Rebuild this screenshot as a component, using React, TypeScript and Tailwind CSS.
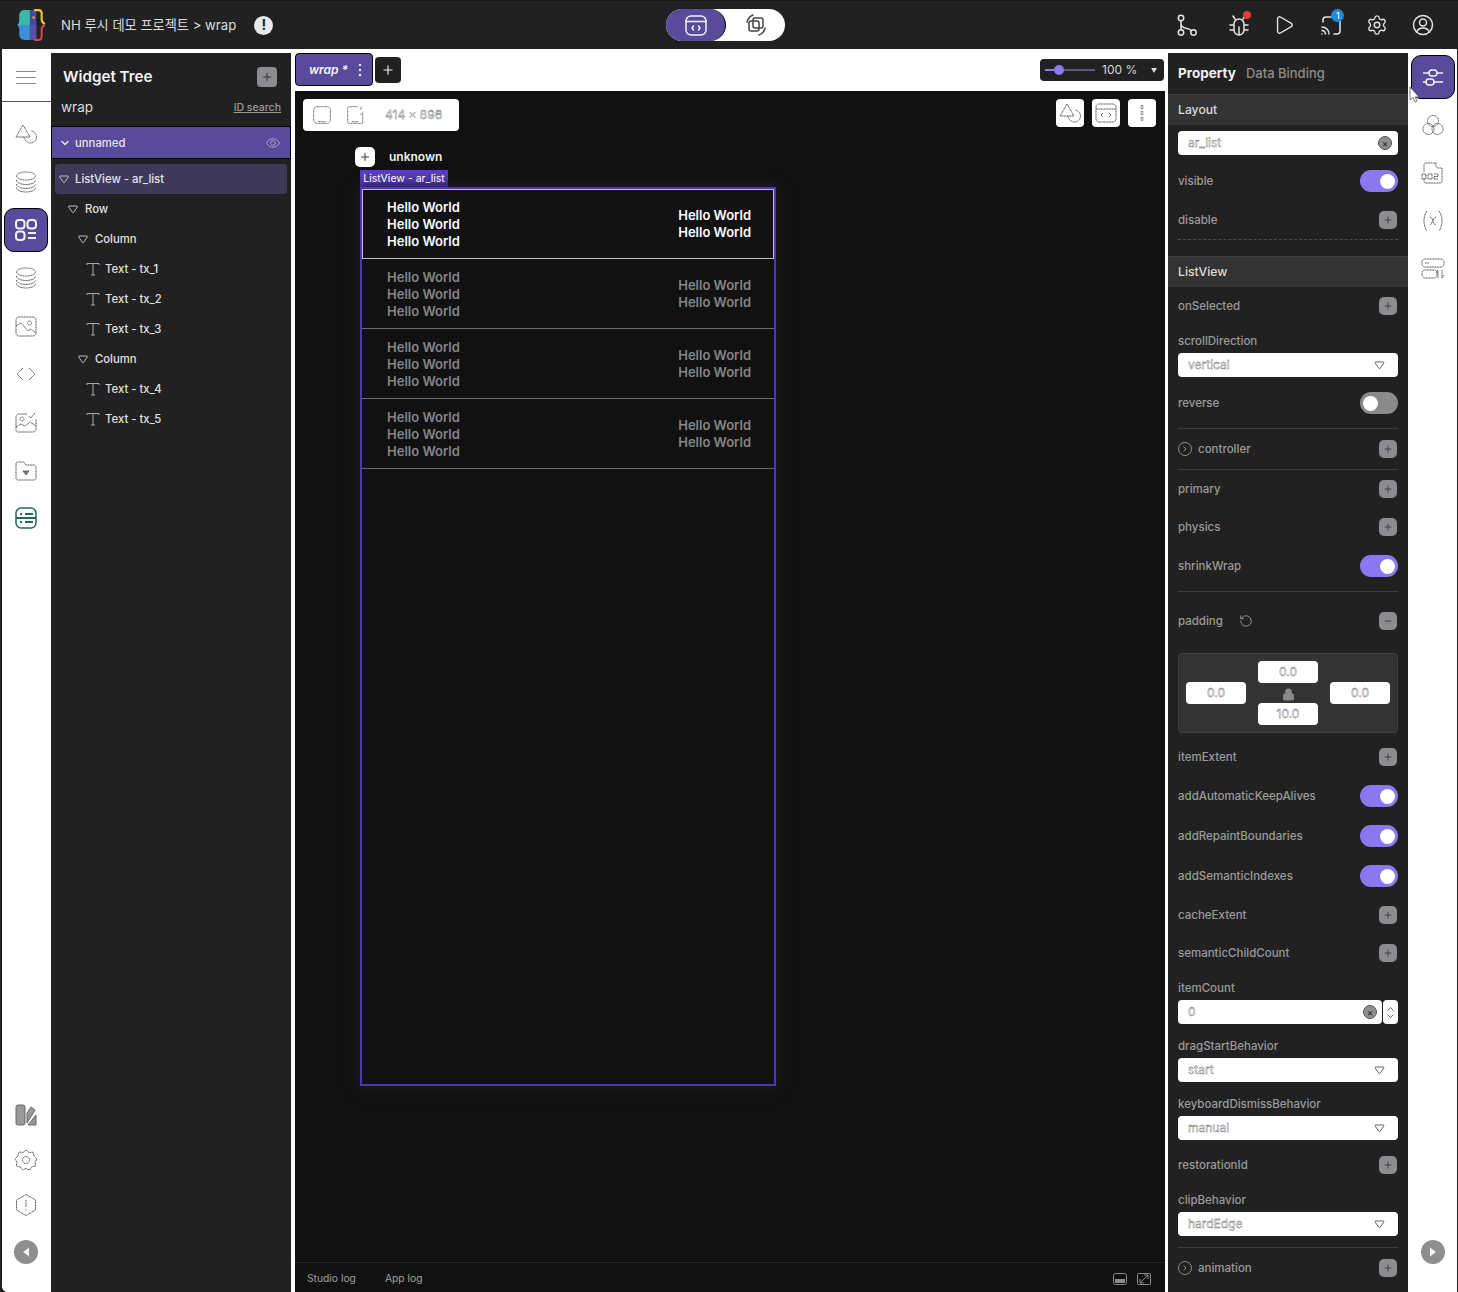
import React from 'react';
import { Plus, Minus, Play, Settings, RotateCw, ChevronDown, Lock } from 'lucide-react';

const FONT = 'font-["Inter","Noto_Sans_CJK_KR",sans-serif]';
const GHOST = 'text-transparent [-webkit-text-stroke:0.35px_#555]';

/** Dotted outline icon, the rail icons look like this on the white background. */
const Dotted = ({ children, size = 24, box = 24 }: { children: React.ReactNode; size?: number; box?: number }) => (
  <svg width={size} height={size} viewBox={`0 0 ${box} ${box}`} fill="none" stroke="#555" strokeWidth="1" strokeDasharray="1.2 0.4">
    {children}
  </svg>
);

const Logo = () => (
  <svg width="32" height="32" viewBox="3 1 28 30" fill="none">
    <path d="M6 7c0-3 2-5 5-5h5v14H4c1-1 2-2 2-4z" fill="#3fb7a6" />
    <path d="M4 16h12v14h-5c-3 0-5-2-5-5v-5c0-2-1-3-2-4z" fill="#3d8fd9" />
    <rect x="16" y="2" width="6" height="28" fill="#4a4a9c" />
    <rect x="16" y="16" width="6" height="14" fill="#5b4ea8" />
    <circle cx="19.5" cy="9" r="1.2" fill="#e8a33a" />
    <path d="M20 2h4c2 0 3 1 3 3v6c0 2 1 3 3 4" stroke="#f0c23c" strokeWidth="2" />
    <path d="M30 16c-2 1-3 2-3 4v6c0 2-1 4-3 4h-4" stroke="#d6453d" strokeWidth="2" />
  </svg>
);

const TopIcon = ({ children, className }: { children: React.ReactNode; className: string }) => (
  <div className={`relative flex items-center justify-center ${className}`}>{children}</div>
);

const WhiteStroke = ({ children }: { children: React.ReactNode }) => (
  <svg width="24" height="24" viewBox="0 0 24 24" fill="none" stroke="#e4e4e4" strokeWidth="1.5" strokeLinecap="round" strokeLinejoin="round">
    {children}
  </svg>
);

const TopBar = () => (
  <div className={`h-[49px] shrink-0 flex items-center bg-[#212121] border-t border-[#171717] ${FONT}`}>
    <div className="ml-[15px] w-[32px] h-[32px]"><Logo /></div>
    <span className="ml-[14px] pt-[1px] text-[13.2px] text-[#dcdcdc] whitespace-nowrap">NH 루시 데모 프로젝트 &gt; wrap</span>
    <div className="ml-[18px] w-[19px] h-[19px] rounded-full bg-[#e8e8e8] flex items-center justify-center text-[#212121] text-[14px] font-bold leading-none">!</div>
    <div className="ml-[393px] w-[119px] h-[32px] rounded-full bg-white flex items-center">
      <div className="w-[60px] h-[32px] rounded-full bg-[#5a4a9c] flex items-center justify-center border-r border-black">
        <svg width="24" height="24" viewBox="0 0 24 24" fill="none" stroke="#f2f2f2" strokeWidth="1.5" strokeLinecap="round">
          <rect x="2" y="3" width="20" height="19" rx="5" />
          <path d="M2 8.5h20M9.5 13l-1.5 2 1.5 2M14.5 13l1.5 2-1.5 2" />
        </svg>
      </div>
      <div className="flex-1 flex items-center justify-center">
        <svg width="24" height="24" viewBox="0 0 24 24" fill="none" stroke="#444" strokeWidth="1.5">
          <rect x="5" y="8" width="10" height="10" rx="2" />
          <rect x="9" y="5" width="10" height="10" rx="2" />
          <path d="M3 9a9.5 9.5 0 0 1 6-7M21 15a9.5 9.5 0 0 1-6 7" strokeLinecap="round" />
        </svg>
      </div>
    </div>
    <TopIcon className="ml-[390px]">
      <WhiteStroke>
        <circle cx="6" cy="5" r="2.7" /><circle cx="6" cy="19.5" r="2.7" /><circle cx="18.5" cy="19.5" r="2.7" />
        <path d="M6 8v9M6 10.5c0 3 3 4.5 6 5 2 .3 3 1 4 2" />
      </WhiteStroke>
    </TopIcon>
    <TopIcon className="ml-[28px]">
      <WhiteStroke>
        <path d="M7 11a5 5 0 0 1 10 0v6a5 5 0 0 1-10 0zM12 14v8M8 6 6 3M16 6l2-3M7 12H3M17 12h4M7 17H3M17 17h4" />
      </WhiteStroke>
      <span className="absolute -top-[2px] right-0 w-[8px] h-[8px] rounded-full bg-[#e53935]" />
    </TopIcon>
    <TopIcon className="ml-[22px]"><Play size={22} strokeWidth={1.5} color="#e4e4e4" /></TopIcon>
    <TopIcon className="ml-[24px]">
      <WhiteStroke>
        <path d="M4 9V7a3 3 0 0 1 3-3h12c1 0 2 1 2 2v12a3 3 0 0 1-3 3h-3M3 14a7 7 0 0 1 7 7M3 17.5a3.500 3.500 0 0 1 3.500 3.500M3 21h.01" />
      </WhiteStroke>
      <span className="absolute -top-[4px] -right-[1px] w-[13px] h-[13px] rounded-full bg-[#1e88e5] text-white text-[9px] font-medium leading-[13px] text-center">1</span>
    </TopIcon>
    <TopIcon className="ml-[23px]"><Settings size={22} strokeWidth={1.5} color="#e4e4e4" /></TopIcon>
    <TopIcon className="ml-[23px]">
      <WhiteStroke>
        <circle cx="12" cy="12" r="9.500" /><circle cx="12" cy="9.500" r="3.500" /><path d="M5.500 19c1.500-3 3.500-4 6.500-4s5 1 6.500 4" />
      </WhiteStroke>
    </TopIcon>
  </div>
);

const RailIcons = {
  shapes: <Dotted><path d="M9 3 2 15h14z" /><path d="M12 19a6 6 0 1 0 5-10" /><path d="M10 15a6 6 0 0 0 2 4" /></Dotted>,
  layers: <Dotted><ellipse cx="12" cy="6" rx="9.500" ry="4" /><path d="M2.500 10c0 2.500 4 4.500 9.500 4.500s9.500-2 9.500-4.500M2.500 14c0 2.500 4 4.500 9.500 4.500s9.500-2 9.500-4.500M2.500 17.500c0 2.500 4 4.500 9.500 4.500s9.500-2 9.500-4.500" /></Dotted>,
  image: <Dotted><rect x="2" y="3" width="20" height="19" rx="3" /><circle cx="15.500" cy="9" r="2" /><path d="M2 12l5-3 7 8 3-2 5 4" /></Dotted>,
  code: <Dotted><path d="M9 6l-6 6 6 6M15 6l6 6-6 6" /></Dotted>,
  imageCheck: <Dotted><path d="M13 4H5a3 3 0 0 0-3 3v13a2 2 0 0 0 2 2h15a3 3 0 0 0 3-3V9" /><circle cx="8" cy="9" r="2" /><path d="M2 17l5-3 4 2 5-4 6 4M15 6l2 2 4-5" /></Dotted>,
  folder: <Dotted><path d="M2 6a2 2 0 0 1 2-2h6l2 3h8a2 2 0 0 1 2 2v11a2 2 0 0 1-2 2H4a2 2 0 0 1-2-2z" /><path d="M9 13h6l-3 4z" fill="#777" /></Dotted>,
  gear: <Dotted><path d="M12 2l3 2.500 4-.5 1 4 3 3-2 3 .5 4-4 1-2 3-3.500-1.500L8.500 22l-2-3-4-1 .5-4-2-3 3-3 1-4 4 .5z" /><circle cx="12" cy="12" r="3.500" /></Dotted>,
  hex: <Dotted><path d="M12 1.500l9.500 5.500v10L12 22.500 2.500 17V7z" /><path d="M12 7v7M12 16.500v1" /></Dotted>,
  sliders: <svg width="24" height="24" viewBox="0 0 24 24" fill="none" stroke="#f2f2f2" strokeWidth="1.5"><path d="M2 8h6M16 8h6M2 17h3M13 17h9" /><rect x="8" y="5" width="8" height="6" rx="3" /><rect x="5" y="14" width="8" height="6" rx="3" /></svg>,
  trio: <Dotted><circle cx="12" cy="8" r="5.500" /><circle cx="7.500" cy="16" r="5.500" /><circle cx="16.500" cy="16" r="5.500" /></Dotted>,
  ds: <Dotted><path d="M5 2h10M21 7v13a2 2 0 0 1-2 2H5a2 2 0 0 1-2-2v-2M3 11V4a2 2 0 0 1 2-2" /><path d="M15 2v3a2 2 0 0 0 2 2h4" /><path d="M1 13h4v5H1zM7 13h4v5H7zM13 13h4v2.500h-4v2.500h4" /></Dotted>,
  variable: <Dotted><path d="M6 2c-2 3-3 6-3 10s1 7 3 10M18 2c2 3 3 6 3 10s-1 7-3 10M9 8c3 0 3 8 6 8M15 8c-3 1-4 7-6 8" /></Dotted>,
  store: <Dotted><rect x="1" y="2" width="22" height="8" rx="3" /><rect x="1" y="13" width="15" height="8" rx="3" /><path d="M4 6h4M17 21v-8l-2 3M21 13v8l2-3" /></Dotted>,
};

const SelectedRail = ({ children }: { children: React.ReactNode }) => (
  <div className="w-[44px] h-[44px] rounded-[10px] bg-[#5a4a9c] border border-black flex items-center justify-center">{children}</div>
);

const RailSlot = ({ children }: { children: React.ReactNode }) => (
  <div className="h-[48px] flex items-center justify-center">{children}</div>
);

const CircleArrow = ({ right = false }: { right?: boolean }) => (
  <div className="w-[24px] h-[24px] rounded-full bg-[#8e8e8e] flex items-center justify-center">
    <svg width="10" height="12" viewBox="0 0 10 12">
      <path d={right ? 'M2 1.500 8 6l-6 4.500z' : 'M8 1.500 2 6l6 4.500z'} fill="#f4f4f4" />
    </svg>
  </div>
);

const LeftRail = () => (
  <div className="w-[49px] shrink-0 bg-white flex flex-col pr-[1px]">
    <div className="-mr-[1px] h-[53px] pt-[4px] border-b border-[#555] flex items-center justify-center">
      <svg className="-ml-[1px]" width="20" height="13" viewBox="0 0 20 13" stroke="#888" strokeWidth="1"><path d="M0 .5h20M0 6.500h20M0 12.500h20" /></svg>
    </div>
    <div className="pt-[8px]">
      <RailSlot>{RailIcons.shapes}</RailSlot>
      <RailSlot>{RailIcons.layers}</RailSlot>
      <RailSlot>
        <SelectedRail>
          <svg width="24" height="24" viewBox="0 0 24 24" fill="none" stroke="#f2f2f2" strokeWidth="2">
            <rect x="2" y="2" width="8.500" height="8.500" rx="3" /><rect x="13.500" y="2" width="8.500" height="8.500" rx="3" /><rect x="2" y="13.500" width="8.500" height="8.500" rx="3" />
            <path d="M14 15h8M14 20h8" />
          </svg>
        </SelectedRail>
      </RailSlot>
      <RailSlot>{RailIcons.layers}</RailSlot>
      <RailSlot>{RailIcons.image}</RailSlot>
      <RailSlot>{RailIcons.code}</RailSlot>
      <RailSlot>{RailIcons.imageCheck}</RailSlot>
      <RailSlot>{RailIcons.folder}</RailSlot>
      <RailSlot>
        <svg width="24" height="24" viewBox="0 0 24 24" fill="none" stroke="#1f6b5c" strokeWidth="1.500">
          <rect x="2" y="2" width="20" height="20" rx="5" /><path d="M2 12h20M6 8h2M11 8h8M6 16h2M11 16h8" strokeWidth="2" />
        </svg>
      </RailSlot>
    </div>
    <div className="mt-auto pb-[15px]">
      <div className="h-[44px] flex items-center justify-center">
        <svg width="24" height="24" viewBox="0 0 24 24" fill="#9a9a9a" stroke="#666"><rect x="2" y="2" width="9" height="20" rx="2" /><path d="M13 10l4-6 4 3-8 13zM14 22l8-10v10z" /></svg>
      </div>
      <div className="h-[45px] flex items-center justify-center">{RailIcons.gear}</div>
      <div className="h-[45px] flex items-center justify-center">{RailIcons.hex}</div>
      <div className="h-[50px] flex items-center justify-center"><CircleArrow /></div>
    </div>
  </div>
);

const Tri = () => (
  <svg width="10" height="10" viewBox="0 0 10 10" fill="none" stroke="#bdbdbd" strokeWidth="1"><path d="M1 2h8c.5 0 .5.500.3 1L5.500 8.500c-.3.400-.7.400-1 0L.7 3C.5 2.500.5 2 1 2z" /></svg>
);

const TextGlyph = () => (
  <svg width="14" height="14" viewBox="0 0 14 14" fill="none" stroke="#a8a8a8" strokeWidth="1"><path d="M1 3V1.500h12V3M7 1.500V13M5 13h4" /></svg>
);

const TreeRow = ({ label, indent, kind = 'tri' }: { label: string; indent: string; kind?: 'tri' | 'text' }) => (
  <div className={`h-[30px] flex items-center text-[11.3px] font-medium text-[#e0e0e0] ${indent} ${kind === 'tri' ? 'gap-[7px]' : 'gap-[5px]'}`}>
    {kind === 'tri' ? <Tri /> : <TextGlyph />}
    <span>{label}</span>
  </div>
);

const WidgetTree = () => (
  <div className={`w-[240px] shrink-0 mt-[4px] bg-[#212121] flex flex-col ${FONT}`}>
    <div className="mt-[6px] h-[36px] flex items-center justify-between pl-[12px] pr-[14px]">
      <span className="pt-[1px] text-[15.2px] font-semibold text-[#f2f2f2]">Widget Tree</span>
      <div className="w-[20px] h-[20px] rounded-[4px] bg-[#8b8c90] flex items-center justify-center"><Plus size={12} color="#333" /></div>
    </div>
    <div className="h-[24px] flex items-center justify-between pl-[10px] pr-[10px]">
      <span className="text-[13.5px] text-[#dcdcdc]">wrap</span>
      <span className="pt-[1px] text-[10.5px] font-medium text-[#9a9a9a] underline">ID search</span>
    </div>
    <div className="mt-[7px] h-[33px] bg-[#5a4a9c] border border-black flex items-center pl-[7px] pr-[10px] text-[11.3px] font-medium text-[#e4e4e4]">
      <ChevronDown size={12} strokeWidth={3} color="#e4e4e4" />
      <span className="ml-[4px] pt-[1px]">unnamed</span>
      <svg className="ml-auto" width="14" height="14" viewBox="0 0 14 14" fill="none" stroke="#a59fc6" strokeWidth="1"><path d="M.5 7C2 4 4.500 2.800 7 2.800S12 4 13.500 7C12 10 9.500 11.200 7 11.200S2 10 .5 7z" /><circle cx="7" cy="7" r="2.300" /></svg>
    </div>
    <div className="mt-[5px] mx-[4px] h-[30px] rounded-[4px] bg-[#3f3a5c] flex items-center gap-[6px] pl-[4px] text-[11.3px] font-medium text-[#e4e4e4]">
      <Tri /><span>ListView - ar_list</span>
    </div>
    <TreeRow label="Row" indent="pl-[17px]" />
    <TreeRow label="Column" indent="pl-[27px]" />
    <TreeRow label="Text - tx_1" indent="pl-[35px]" kind="text" />
    <TreeRow label="Text - tx_2" indent="pl-[35px]" kind="text" />
    <TreeRow label="Text - tx_3" indent="pl-[35px]" kind="text" />
    <TreeRow label="Column" indent="pl-[27px]" />
    <TreeRow label="Text - tx_4" indent="pl-[35px]" kind="text" />
    <TreeRow label="Text - tx_5" indent="pl-[35px]" kind="text" />
  </div>
);

const ListItem = ({ active = false }: { active?: boolean }) => (
  <div className={`h-[70px] flex items-center justify-between border-b text-[13px] leading-[17px] font-semibold ${active ? 'pl-[24px] pr-[22px] text-white border-[#c9bcc4] border-x border-t border-x-[#c9b9e6] border-t-[#c9b9e6]' : 'pl-[25px] pr-[23px] pt-[1px] text-[#858585] border-[#6f6a70]'}`}>
    <div><div>Hello World</div><div>Hello World</div><div>Hello World</div></div>
    <div className="pb-[1px]"><div>Hello World</div><div>Hello World</div></div>
  </div>
);

const SmallSquare = ({ children }: { children: React.ReactNode }) => (
  <div className="w-[28px] h-[28px] rounded-[4px] bg-white flex items-center justify-center">{children}</div>
);

const Canvas = () => (
  <div className={`ml-[4px] w-[870px] shrink-0 bg-white flex flex-col ${FONT}`}>
    <div className="h-[42px] shrink-0 flex items-start">
      <div className="mt-[4px] w-[78px] h-[33px] rounded-[4px] bg-[#5a4a9c] border border-black flex items-center pl-[13px] text-[12px] italic font-semibold text-[#f2f2f2]">
        <span>wrap *</span>
        <svg className="ml-[10px]" width="4" height="14" viewBox="0 0 4 14" fill="#e0e0e0"><circle cx="2" cy="2" r="1.300" /><circle cx="2" cy="7" r="1.300" /><circle cx="2" cy="12" r="1.300" /></svg>
      </div>
      <div className="mt-[8px] ml-[2px] w-[26px] h-[26px] rounded-[4px] bg-[#212121] flex items-center justify-center"><Plus size={14} color="#eee" /></div>
      <div className="mt-[10px] ml-auto mr-[1px] w-[124px] h-[22px] rounded-[4px] bg-[#212121] flex items-center pl-[5px] pr-[7px] text-[12px] text-[#d8d8d8]">
        <div className="relative w-[50px] h-[2px] bg-[#5f5a80]">
          <div className="w-[14px] h-[2px] bg-[#8b7bf0]" />
          <div className="absolute -top-[4px] left-[9px] w-[10px] h-[10px] rounded-full bg-[#8b7bf0]" />
        </div>
        <span className="ml-[7px]">100 %</span>
        <svg className="ml-auto" width="6" height="5" viewBox="0 0 7 6" fill="#ddd"><path d="M0 0h7L3.500 6z" /></svg>
      </div>
    </div>
    <div className="flex-1 bg-[#111111] flex flex-col">
      <div className="flex-1 relative pl-[65px]">
        <div className="absolute top-[8px] left-[8px] w-[156px] h-[32px] rounded-[4px] bg-white flex items-center pl-[9px]">
          <Dotted size={20}><rect x="2" y="2" width="20" height="20" rx="4" /><path d="M7 20h10" /></Dotted>
          <div className="ml-[14px]"><Dotted size={20}><path d="M14 2H4a2 2 0 0 0-2 2v16a2 2 0 0 0 2 2h16V8" /><path d="M18 2v4M18 10v2M7 20h8" /></Dotted></div>
          <span className={`ml-[19px] text-[12px] ${GHOST}`}>414 x 896</span>
        </div>
        <div className="absolute top-[8px] right-[9px] flex gap-[8px]">
          <SmallSquare>{RailIcons.shapes}</SmallSquare>
          <SmallSquare><Dotted><rect x="2" y="3" width="20" height="18" rx="3" /><path d="M2 8h20M9 12l-2 2 2 2M15 12l2 2-2 2" /></Dotted></SmallSquare>
          <SmallSquare><Dotted size={20}><rect x="11" y="3" width="2" height="4" /><rect x="11" y="10" width="2" height="4" /><rect x="11" y="17" width="2" height="4" /></Dotted></SmallSquare>
        </div>
        <div className="pt-[56px]">
          <div className="h-[20px] flex items-center">
            <div className="-ml-[5px] w-[20px] h-[20px] rounded-[5px] bg-white flex items-center justify-center"><Plus size={12} color="#333" /></div>
            <span className="ml-[14px] text-[12px] font-semibold text-[#eee]">unknown</span>
          </div>
          <div className="mt-[3px] w-[88px] h-[17px] pt-[1px] bg-[#5b3dcf] text-white text-[10.5px] leading-[16px] text-center">ListView - ar_list</div>
          <div className="w-[416px] h-[899px] border-2 border-[#4f36b8] shadow-[0_0_14px_2px_#1c1c1c]">
            <ListItem active />
            <ListItem />
            <ListItem />
            <ListItem />
          </div>
        </div>
      </div>
      <div className="h-[30px] pt-[2px] shrink-0 mt-[5px] border-t border-[#262626] flex items-center pl-[12px] pr-[14px] text-[10.3px] text-[#a0a0a0]">
        <span>Studio log</span>
        <span className="ml-[29px]">App log</span>
        <svg className="ml-auto" width="14" height="12" viewBox="0 0 14 12" fill="none" stroke="#8a8a8a"><rect x=".5" y=".5" width="13" height="11" rx="2" /><rect x="2" y="6" width="10" height="4" fill="#8a8a8a" stroke="none" /></svg>
        <svg className="ml-[10px]" width="14" height="12" viewBox="0 0 14 12" fill="none" stroke="#8a8a8a"><rect x=".5" y=".5" width="13" height="11" rx="1" /><path d="M3 10l8-8M7 2h4v4M3 6v4h4" /></svg>
      </div>
    </div>
  </div>
);

const PlusBox = ({ minus = false }: { minus?: boolean }) => (
  <div className="w-[18px] h-[18px] mr-[1px] rounded-[5px] bg-[#8b8c90] flex items-center justify-center">
    {minus ? <Minus size={10} color="#444" strokeWidth={2.5} /> : <Plus size={10} color="#444" strokeWidth={2.5} />}
  </div>
);

const Toggle = ({ on }: { on: boolean }) => (
  <div className={`w-[38px] h-[22px] rounded-full flex items-center px-[3px] ${on ? 'bg-[#8b78f0] justify-end' : 'bg-[#8a8a8a] justify-start'}`}>
    <div className="w-[15px] h-[15px] rounded-full bg-white" />
  </div>
);

const Prop = ({ label, h, children }: { label: string; h: string; children?: React.ReactNode }) => (
  <div className={`${h} flex items-center justify-between text-[11.5px] font-medium text-[#9b9b9b]`}>
    <span className="pt-[1px]">{label}</span>
    {children}
  </div>
);

const AddProp = ({ label, icon = false }: { label: string; icon?: boolean }) => (
  <div className="h-[38px] flex items-center justify-between text-[11.5px] font-medium text-[#9b9b9b]">
    <span className="flex items-center gap-[6px]">
      {icon && <span className="w-[14px] h-[14px] rounded-full border border-[#8a8a8a] flex items-center justify-center"><svg width="4" height="6" viewBox="0 0 4 6" fill="none" stroke="#8a8a8a"><path d="M.5.5 3 3 .5 5.500" /></svg></span>}
      <span className="pt-[1px]">{label}</span>
    </span>
    <PlusBox />
  </div>
);

const FieldLabel = ({ label, mt }: { label: string; mt: string }) => (
  <div className={`${mt} h-[20px] pt-[1px] flex items-center text-[11.5px] font-medium text-[#9b9b9b]`}>{label}</div>
);

const Select = ({ value }: { value: string }) => (
  <div className="mt-[2px] h-[24px] rounded-[4px] bg-white flex items-center pl-[10px] pr-[13px]">
    <span className={`text-[12px] ${GHOST}`}>{value}</span>
    <svg className="ml-auto" width="11" height="10" viewBox="0 0 10 10" fill="none" stroke="#666"><path d="M1 2h8c.5 0 .5.500.3 1L5.500 8.500c-.3.400-.7.400-1 0L.7 3C.5 2.500.5 2 1 2z" /></svg>
  </div>
);

const ClearMark = () => (
  <span className="ml-auto w-[14px] h-[14px] rounded-full bg-[#8f8f8f] border border-[#555] flex items-center justify-center text-[#222] text-[10px] leading-none">×</span>
);

const Pad = ({ value }: { value: string }) => (
  <div className={`w-[60px] h-[22px] rounded-[4px] bg-white flex items-center justify-center text-[12px] ${GHOST}`}>{value}</div>
);

const SectionHead = ({ label }: { label: string }) => (
  <div className="-mx-[10px] h-[31px] bg-[#333333] border-t border-[#3f3f3f] flex items-center px-[10px] text-[12.2px] font-medium text-[#dcdcdc]">{label}</div>
);

const PropertyPanel = () => (
  <div className={`ml-[3px] w-[240px] shrink-0 mt-[4px] bg-[#212121] px-[10px] overflow-hidden ${FONT}`}>
    <div className="h-[41px] flex items-center gap-[10px]">
      <span className="text-[13.5px] font-bold text-[#f2f2f2]">Property</span>
      <span className="text-[13px] font-medium text-[#8c8c8c]">Data Binding</span>
    </div>
    <SectionHead label="Layout" />
    <div className="mt-[6px] h-[24px] rounded-[4px] bg-white flex items-center pl-[10px] pr-[6px]">
      <span className={`text-[12px] ${GHOST}`}>ar_list</span>
      <ClearMark />
    </div>
    <div className="mt-[6px]"><Prop label="visible" h="h-[40px]"><Toggle on /></Prop></div>
    <Prop label="disable" h="h-[38px]"><PlusBox /></Prop>
    <div className="border-t border-dashed border-[#4a4a4a] mb-[16px]" />
    <SectionHead label="ListView" />
    <AddProp label="onSelected" />
    <FieldLabel label="scrollDirection" mt="mt-[6px]" />
    <Select value="vertical" />
    <div className="mt-[6px]"><Prop label="reverse" h="h-[40px]"><Toggle on={false} /></Prop></div>
    <div className="mt-[5px] border-t border-[#3d3d3d]" />
    <div className="h-[40px] flex items-center"><div className="w-full"><AddProp label="controller" icon /></div></div>
    <div className="border-t border-[#3d3d3d]" />
    <AddProp label="primary" />
    <AddProp label="physics" />
    <Prop label="shrinkWrap" h="h-[40px]"><Toggle on /></Prop>
    <div className="mt-[5px] border-t border-[#3d3d3d]" />
    <div className="h-[58px] flex items-center text-[11.5px] font-medium text-[#9b9b9b]">
      <span className="pt-[1px]">padding</span>
      <RotateCw size={14} strokeWidth={1.2} color="#bdbdbd" className="ml-[16px] -scale-x-100" />
      <div className="ml-auto"><PlusBox minus /></div>
    </div>
    <div className="mt-[3px] h-[80px] rounded-[4px] bg-[#333333] border border-[#3f3f3f] grid grid-cols-[60px_60px_60px] justify-between px-[7px] items-center">
      <Pad value="0.0" />
      <div className="flex flex-col items-center">
        <Pad value="0.0" />
        <div className="h-[20px] flex items-center pt-[2px]"><Lock size={13} color="#8a8a8a" fill="#8a8a8a" /></div>
        <Pad value="10.0" />
      </div>
      <Pad value="0.0" />
    </div>
    <div className="mt-[5px]"><AddProp label="itemExtent" /></div>
    <Prop label="addAutomaticKeepAlives" h="h-[40px]"><Toggle on /></Prop>
    <Prop label="addRepaintBoundaries" h="h-[40px]"><Toggle on /></Prop>
    <Prop label="addSemanticIndexes" h="h-[40px]"><Toggle on /></Prop>
    <AddProp label="cacheExtent" />
    <AddProp label="semanticChildCount" />
    <FieldLabel label="itemCount" mt="mt-[6px]" />
    <div className="mt-[2px] h-[24px] flex gap-[1px]">
      <div className="flex-1 rounded-[4px] bg-white flex items-center pl-[10px] pr-[5px]">
        <span className={`text-[12px] ${GHOST}`}>0</span>
        <ClearMark />
      </div>
      <div className="w-[15px] rounded-[4px] bg-white flex flex-col items-center justify-center gap-[3px]">
        <svg width="7" height="4" viewBox="0 0 7 4" fill="none" stroke="#666"><path d="M.5 3.500 3.500.5l3 3" /></svg>
        <svg width="7" height="4" viewBox="0 0 7 4" fill="none" stroke="#666"><path d="M.5.5l3 3 3-3" /></svg>
      </div>
    </div>
    <FieldLabel label="dragStartBehavior" mt="mt-[12px]" />
    <Select value="start" />
    <FieldLabel label="keyboardDismissBehavior" mt="mt-[12px]" />
    <Select value="manual" />
    <div className="mt-[6px]"><AddProp label="restorationId" /></div>
    <FieldLabel label="clipBehavior" mt="mt-[6px]" />
    <Select value="hardEdge" />
    <div className="mt-[11px] border-t border-[#3d3d3d]" />
    <div className="h-[40px] flex items-center"><div className="w-full"><AddProp label="animation" icon /></div></div>
  </div>
);

const RightRail = () => (
  <div className="relative w-[49px] shrink-0 bg-white flex flex-col">
    <div className="pt-[4px]">
      <RailSlot><SelectedRail>{RailIcons.sliders}</SelectedRail></RailSlot>
      <RailSlot>{RailIcons.trio}</RailSlot>
      <RailSlot>{RailIcons.ds}</RailSlot>
      <RailSlot>{RailIcons.variable}</RailSlot>
      <RailSlot>{RailIcons.store}</RailSlot>
    </div>
    <div className="mt-auto h-[50px] pb-[15px] box-content flex items-center justify-center"><CircleArrow right /></div>
    <svg className="absolute top-[37px] left-[1px]" width="11" height="18" viewBox="0 0 11 18" fill="#fff" stroke="#555" strokeWidth="0.8"><path d="M1 1v13l3-2.500L6 16l2-1-2-4h4z" /></svg>
  </div>
);

export default function App() {
  return (
    <div className="w-[1458px] h-[1292px] overflow-hidden bg-[#212121] flex flex-col pl-[2px] pr-[1px]">
      <div className="-ml-[2px] -mr-[1px]"><TopBar /></div>
      <div className="flex-1 min-h-0 flex bg-white rounded-bl-[6px] overflow-hidden">
        <LeftRail />
        <WidgetTree />
        <Canvas />
        <PropertyPanel />
        <RightRail />
      </div>
    </div>
  );
}
